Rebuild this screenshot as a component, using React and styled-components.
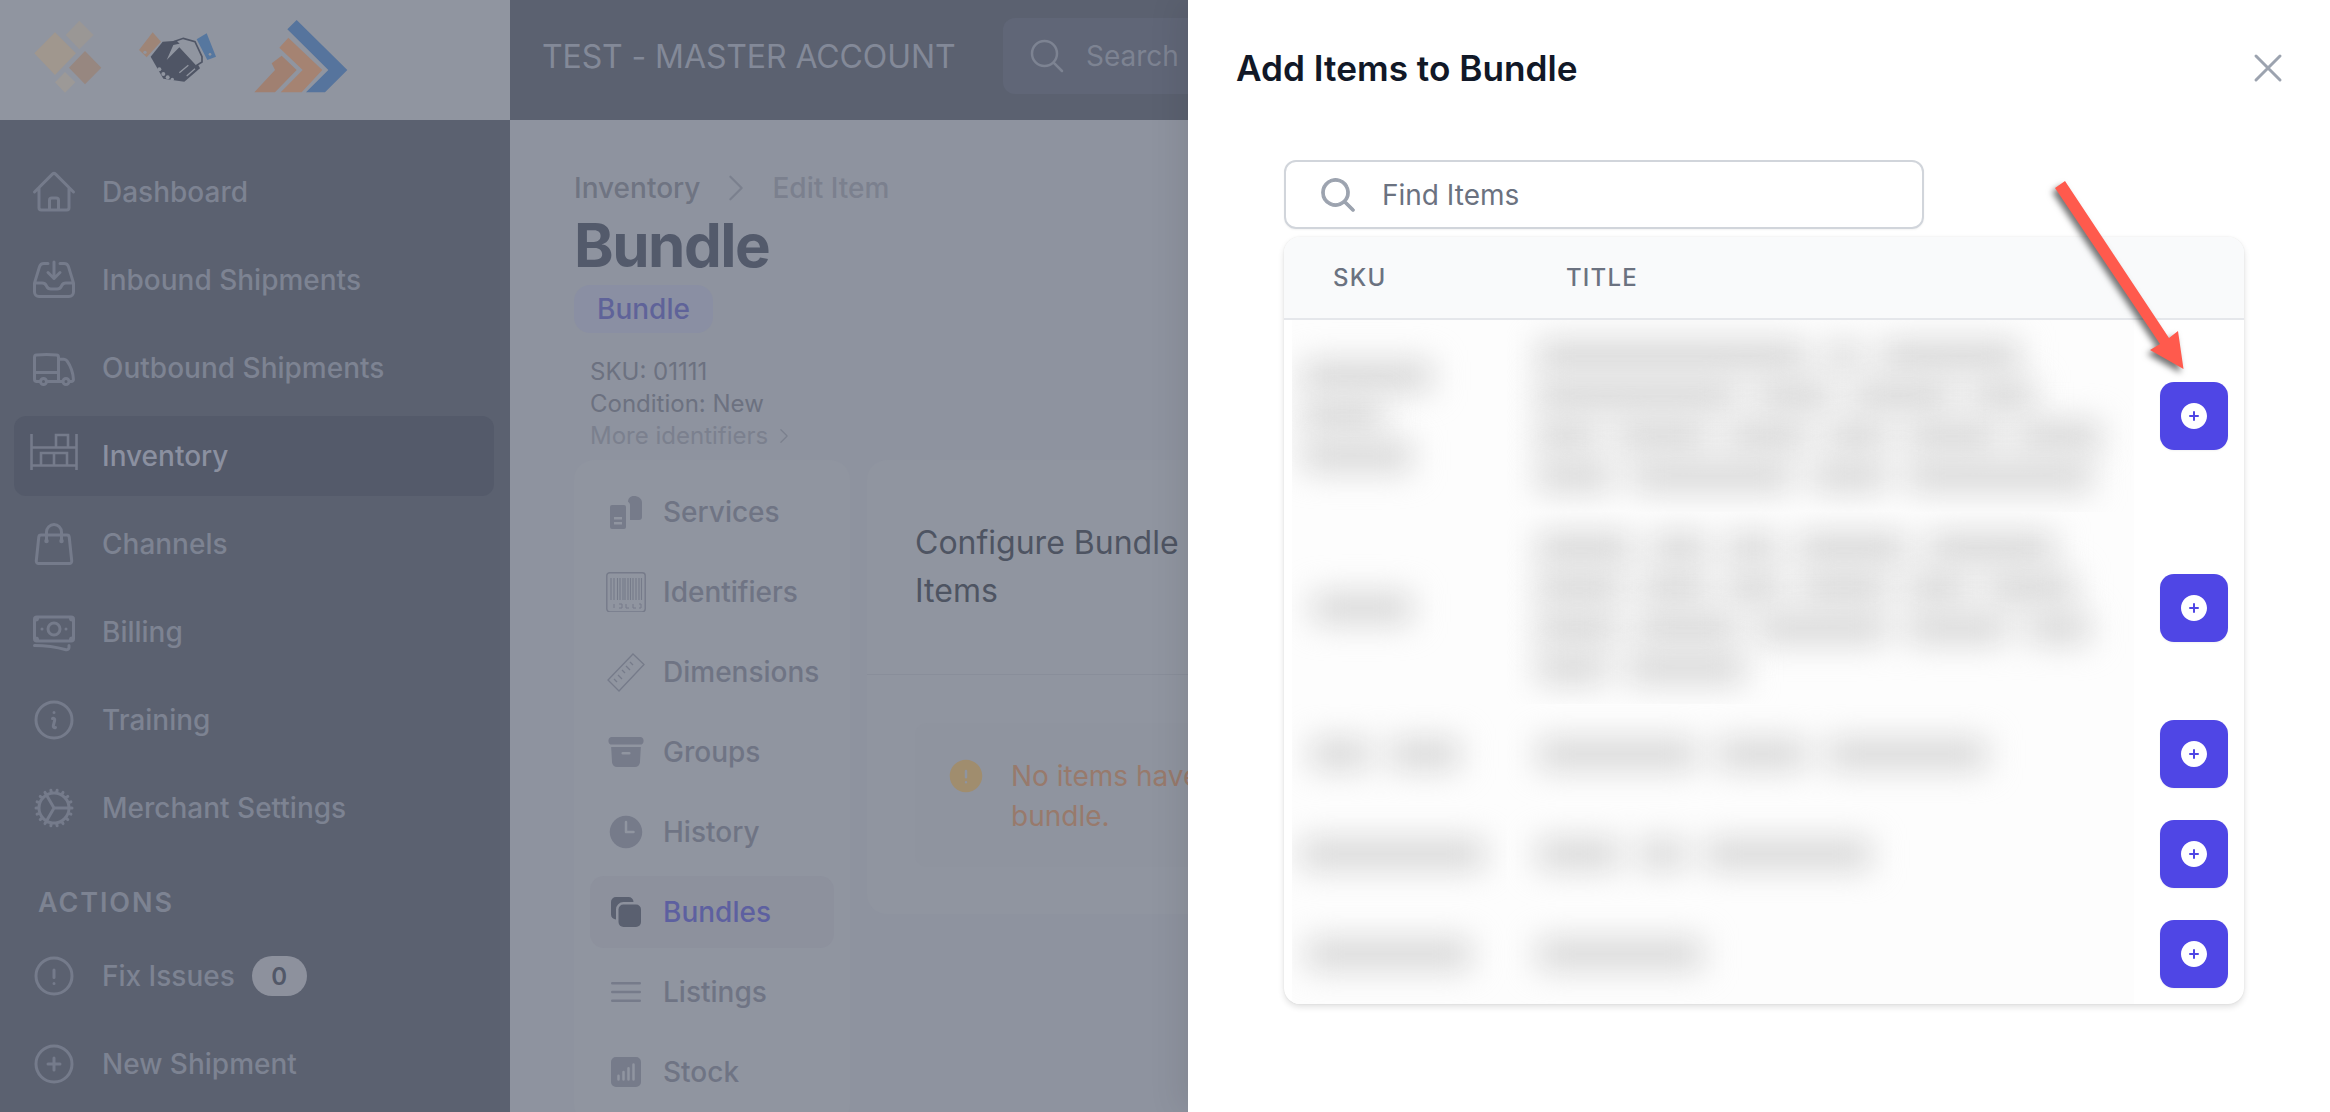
import React from 'react';
import styled, { createGlobalStyle } from 'styled-components';
import {
  HiOutlineHome, HiOutlineInboxArrowDown, HiOutlineTruck, HiOutlineShoppingBag, HiOutlineBanknotes,
  HiOutlineInformationCircle, HiOutlineCog, HiOutlineExclamationCircle, HiOutlinePlusCircle,
  HiOutlineMagnifyingGlass, HiOutlineChevronRight, HiOutlineXMark, HiOutlineBars3,
  HiArchiveBox, HiClock, HiSquare2Stack, HiChartBarSquare, HiExclamationCircle,
  HiMagnifyingGlass, HiPlusCircle,
} from 'react-icons/hi2';

const Global = createGlobalStyle`
  html, body { margin: 0; padding: 0; height: 1112px; overflow: hidden; background: #fff; }
  body { font-family: Inter, "Liberation Sans", sans-serif; }
  * { box-sizing: border-box; }
`;

const Page = styled.div`
  position: relative;
  width: 2330px;
  height: 1112px;
  display: flex;
  overflow: hidden;
`;

const Sidebar = styled.aside`
  width: 510px;
  flex: none;
  background: #5b6170;
  display: flex;
  flex-direction: column;
`;
const LogoBar = styled.div`
  height: 120px;
  background: #9095a0;
  flex: none;
`;
const Nav = styled.nav`
  padding: 32px 16px 0 14px;
  display: flex;
  flex-direction: column;
  gap: 8px;
`;
const NavItem = styled.div`
  height: 80px;
  display: flex;
  align-items: center;
  padding-left: 16px;
  gap: 24px;
  border-radius: 12px;
  font-size: 28px;
  font-weight: 500;
  color: ${p => (p.$active ? '#8b90a0' : '#7d8392')};
  background: ${p => (p.$active ? '#545a6a' : 'transparent')};
  svg { width: 48px; height: 48px; flex: none; color: #757b8b; }
`;
const SectionLabel = styled.div`
  margin: 27px 0 5px 24px;
  line-height: 40px;
  font-size: 27px;
  font-weight: 600;
  letter-spacing: 1.9px;
  color: #7d8392;
`;
const Count = styled.span`
  margin-left: -7px;
  width: 55px;
  height: 40px;
  border-radius: 20px;
  background: #8d919d;
  color: #525868;
  font-size: 24px;
  font-weight: 600;
  display: flex;
  align-items: center;
  justify-content: center;
`;

const Main = styled.main`
  flex: 1;
  min-width: 0;
  background: #8e939f;
  display: flex;
  flex-direction: column;
`;
const TopBar = styled.header`
  height: 120px;
  flex: none;
  background: #5b6170;
  display: flex;
  align-items: center;
  padding: 0 0 8px 32px;
  gap: 49px;
`;
const Account = styled.div`
  font-size: 32px;
  letter-spacing: -0.1px;
  color: #838998;
  white-space: nowrap;
  width: 412px;
`;
const TopSearch = styled.div`
  width: 500px;
  height: 76px;
  border-radius: 12px;
  background: #606677;
  display: flex;
  align-items: center;
  padding-left: 24px;
  gap: 19px;
  font-size: 28px;
  color: #7d8392;
  svg { width: 40px; height: 40px; color: #7d8392; }
`;
const Content = styled.div`
  padding: 48px 0 0 64px;
`;
const Crumbs = styled.div`
  display: flex;
  align-items: center;
  height: 40px;
  gap: 18px;
  font-size: 28px;
  font-weight: 500;
  color: #6f7482;
  svg { width: 36px; height: 36px; color: #7b808e; }
`;
const CrumbLast = styled.span`
  color: #7b808e;
`;
const PageTitle = styled.h1`
  margin: 1px 0 0;
  font-size: 60px;
  letter-spacing: -1.5px;
  line-height: 72px;
  font-weight: 700;
  color: #535a6b;
`;
const TypeBadge = styled.div`
  margin-top: 4px;
  width: 139px;
  height: 48px;
  border-radius: 16px;
  background: #8a8fa3;
  color: #5f6399;
  font-size: 28px;
  font-weight: 500;
  display: flex;
  align-items: center;
  justify-content: center;
`;
const Meta = styled.div`
  margin: 23px 0 8px 16px;
  font-size: 24px;
  line-height: 32px;
  color: #6c7180;
`;
const MoreLink = styled.div`
  display: flex;
  align-items: center;
  gap: 6px;
  color: #7b808e;
  svg { width: 20px; height: 20px; }
`;
const Columns = styled.div`
  display: flex;
  gap: 17px;
  align-items: flex-start;
`;
const SideCard = styled.div`
  width: 276px;
  flex: none;
  background: #9095a0;
  border-radius: 20px;
  padding: 16px;
  display: flex;
  flex-direction: column;
  gap: 8px;
`;
const SideItem = styled.div`
  height: 72px;
  display: flex;
  align-items: center;
  gap: 17px;
  padding-left: 16px;
  border-radius: 14px;
  font-size: 28px;
  font-weight: 500;
  color: ${p => (p.$active ? '#5d60a0' : '#6f7484')};
  background: ${p => (p.$active ? '#8d919d' : 'transparent')};
  svg { width: 40px; height: 40px; flex: none; color: ${p => (p.$active ? '#5a6070' : '#767b8a')}; }
`;
const MainCard = styled.section`
  width: 760px;
  flex: none;
  background: #9095a0;
  border-radius: 20px;
  height: 454px;
`;
const CardHead = styled.div`
  padding: 59px 48px 59px;
  border-bottom: 1px solid #898e9a;
  font-size: 32px;
  line-height: 48px;
  color: #4e5462;
  height: 215px;
`;
const CardTitle = styled.div`
  width: 300px;
`;
const Alert = styled.div`
  margin: 48px 0 0 48px;
  width: 660px;
  height: 144px;
  border-radius: 12px;
  background: #8f949f;
  display: flex;
  gap: 25px;
  padding: 33px 31px;
  font-size: 28px;
  line-height: 40px;
  color: #987a6c;
  svg { width: 40px; height: 40px; flex: none; color: #a08d6e; }
`;
const AlertText = styled.div`
  width: 490px;
`;

const Drawer = styled.div`
  position: absolute;
  top: 0;
  right: 0;
  bottom: 0;
  width: 1142px;
  background: #fff;
  box-shadow: -10px 0 30px rgba(0, 0, 0, 0.08);
`;
const DrawerHead = styled.div`
  display: flex;
  align-items: center;
  justify-content: space-between;
  padding: 44px 38px 0 48px;
  height: 92px;
  color: #111827;
  font-size: 35.2px;
  font-weight: 600;
  svg { width: 48px; height: 48px; color: #9ca3af; }
`;
const DrawerBody = styled.div`
  padding: 68px 0 0 96px;
`;
const FindBox = styled.div`
  width: 640px;
  height: 69px;
  border: 2px solid #d1d5db;
  border-radius: 12px;
  box-shadow: 0 1px 2px rgba(0, 0, 0, 0.05);
  display: flex;
  align-items: center;
  padding-left: 32px;
  gap: 24px;
  font-size: 28px;
  color: #6b7280;
  svg { width: 40px; height: 40px; color: #9ca3af; stroke: currentColor; stroke-width: 0.7; }
`;
const Table = styled.div`
  margin-top: 8px;
  width: 960px;
  height: 767px;
  border-radius: 16px;
  background: #fff;
  box-shadow: 0 3px 6px rgba(0, 0, 0, 0.12), 0 0 2px rgba(0, 0, 0, 0.08);
  overflow: hidden;
`;
const TableHead = styled.div`
  height: 83px;
  background: #f9fafb;
  border-bottom: 2px solid #e5e7eb;
  display: grid;
  grid-template-columns: 282px 1fr;
  align-items: center;
  padding-left: 49px;
  font-size: 24px;
  font-weight: 500;
  letter-spacing: 1.2px;
  color: #6b7280;
`;
const HeadTitle = styled.span`
  margin-left: -49px;
`;
const Row = styled.div`
  height: ${p => p.$h}px;
  display: grid;
  grid-template-columns: 215px 627px 94px;
  padding-left: 8px;
  align-items: stretch;
`;
const BlurCell = styled.div`
  background: #fdfdfd;
  overflow: hidden;
  display: flex;
  flex-direction: column;
  justify-content: center;
  padding-left: ${p => p.$pad}px;
`;
const BlurLine = styled.div`
  height: 40px;
  display: flex;
  align-items: center;
  gap: 20px;
  filter: blur(16px);
`;
const Smudge = styled.span`
  display: block;
  width: ${p => p.$w}px;
  height: 30px;
  background: #d6d6d6;
`;
const ActionCell = styled.div`
  display: flex;
  align-items: center;
  justify-content: flex-end;
`;
const AddButton = styled.button`
  width: 68px;
  height: 68px;
  border: 0;
  padding: 0;
  border-radius: 14px;
  background: #4f46e5;
  box-shadow: 0 1px 2px rgba(0, 0, 0, 0.05);
  display: flex;
  align-items: center;
  justify-content: center;
  svg { width: 32px; height: 32px; color: #fff; }
`;
const Arrow = styled.svg`
  position: absolute;
  left: 852px;
  top: 170px;
  width: 160px;
  height: 210px;
  overflow: visible;
  filter: drop-shadow(-3px 4px 3px rgba(0, 0, 0, 0.55));
`;

const InventoryIcon = () => (
  <svg viewBox="0 0 48 48" fill="none" stroke="currentColor" strokeWidth="2.6">
    <path d="M1.5 2v36M46.5 2v36M1.5 15.5h45M1.5 33.5h45" />
    <path d="M26 15V3h12v12M11 33V21h26v12M24 21v12" />
  </svg>
);
const ServicesIcon = () => (
  <svg viewBox="0 0 40 40" fill="currentColor">
    <path fillRule="evenodd" d="M6 13h12a2 2 0 012 2v20a2 2 0 01-2 2H6a2 2 0 01-2-2V15a2 2 0 012-2zm2 12v2.5h8V25zm0 5v2.5h8V30z" />
    <path d="M22 10c0-3.500 2-6 6-6s8 2.500 8 6.500V25c0 2-1 3-3 3h-9V13c0-1.500-1-3-2-3z" />
  </svg>
);
const BarcodeIcon = () => (
  <svg viewBox="0 0 40 40" fill="none" stroke="currentColor">
    <rect x="0.8" y="0.8" width="38.4" height="42" rx="3" strokeWidth="1.4" transform="scale(1 0.93)" />
    <path strokeWidth="1.1" d="M5 6v22M8 6v22M11.500 6v22M14 6v22M17 6v22M19 6v22M22 6v22M24.500 6v22M27 6v22M30 6v22M33 6v22M35.500 6v22" />
    <path strokeWidth="1" d="M8 32v4M13 32h3v4h-3M20 32v4h3M27 32v4h3M33 32h2v4h-2" />
  </svg>
);
const RulerIcon = () => (
  <svg viewBox="0 0 40 40" fill="none" stroke="currentColor" strokeWidth="1.3">
    <path d="M27 2l11 10.500L13 39 2 28z" />
    <path d="M24 10l3 3M20 14l4 4M16 18l3 3M12 23l4 4M8 27l3 3" />
  </svg>
);

const Logos = () => (
  <svg width="400" height="120" viewBox="0 0 1200 360">
    <g>
      <polygon points="165,97 228,160 165,225 103,160" fill="#a0978e" />
      <polygon points="238,62 281,105 238,148 197,105" fill="#9a9795" />
      <polygon points="255,153 304,203 255,253 207,203" fill="#978780" />
      <polygon points="195,216 226,247 195,278 165,247" fill="#9c9997" />
    </g>
    <g>
      <polygon points="417,150 458,97 483,125 440,172" fill="#9e8577" />
      <circle cx="435" cy="157" r="5" fill="#9095a0" />
      <polygon points="590,118 620,100 648,170 622,180" fill="#56779f" />
      <circle cx="630" cy="163" r="4" fill="#9095a0" />
      <path d="M452 170 L488 125 L530 122 L585 178 L600 205 L553 245 L490 236 Z" fill="#4f5565" />
      <path d="M500 180 L520 135 L552 128 L598 188 L588 196 L538 142 Z" fill="#9095a0" />
      <path d="M520 125 L550 115 L585 125 L606 170 L606 186 L590 196" fill="none" stroke="#4f5565" strokeWidth="5" />
      <g fill="#9095a0">
        <circle cx="478" cy="208" r="6" /><circle cx="490" cy="222" r="6" />
        <circle cx="503" cy="232" r="6" /><circle cx="517" cy="238" r="5" />
      </g>
      <path d="M538 218 L565 196 M560 228 L585 206" stroke="#9095a0" strokeWidth="4" />
    </g>
    <g>
      <polygon points="862,88 890,60 1042,210 975,277 918,277 985,210" fill="#56749d" />
      <polygon points="838,143 865,113 967,210 905,277 842,277 908,210" fill="#a58372" />
      <polygon points="815,190 845,167 890,210 825,277 763,277 825,210" fill="#a08071" />
    </g>
  </svg>
);

const navTop = [
  [HiOutlineHome, 'Dashboard'],
  [HiOutlineInboxArrowDown, 'Inbound Shipments'],
  [HiOutlineTruck, 'Outbound Shipments'],
  [InventoryIcon, 'Inventory', true],
  [HiOutlineShoppingBag, 'Channels'],
  [HiOutlineBanknotes, 'Billing'],
  [HiOutlineInformationCircle, 'Training'],
  [HiOutlineCog, 'Merchant Settings'],
];
const sideNav = [
  [ServicesIcon, 'Services'],
  [BarcodeIcon, 'Identifiers'],
  [RulerIcon, 'Dimensions'],
  [HiArchiveBox, 'Groups'],
  [HiClock, 'History'],
  [HiSquare2Stack, 'Bundles', true],
  [HiOutlineBars3, 'Listings'],
  [HiChartBarSquare, 'Stock'],
];
const rows = [
  { h: 192, skuPad: 10, sku: [[130], [80], [110]], title: [[271, 32, 140], [200, 75, 100, 63], [60, 90, 80, 60, 90, 84], [75, 160, 75, 185]] },
  { h: 192, skuPad: 20, sku: [[100]], title: [[95, 55, 50, 110, 128], [85, 65, 55, 85, 60, 88], [80, 100, 130, 100, 63], [70, 118]] },
  { h: 100, skuPad: 18, sku: [[60, 70]], title: [[160, 90, 160]] },
  { h: 100, skuPad: 8, sku: [[185]], title: [[83, 45, 166]] },
  { h: 100, skuPad: 14, sku: [[165]], title: [[166]] },
];

const Blurred = ({ lines, pad }) => (
  <BlurCell $pad={pad}>
    {lines.map((words, i) => (
      <BlurLine key={i}>
        {words.map((w, j) => <Smudge key={j} $w={w} />)}
      </BlurLine>
    ))}
  </BlurCell>
);

export default function App() {
  return (
    <Page>
      <Global />
      <Sidebar>
        <LogoBar><Logos /></LogoBar>
        <Nav>
          {navTop.map(([Icon, label, active]) => (
            <NavItem key={label} $active={active}><Icon />{label}</NavItem>
          ))}
          <SectionLabel>ACTIONS</SectionLabel>
          <NavItem><HiOutlineExclamationCircle />Fix Issues<Count>0</Count></NavItem>
          <NavItem><HiOutlinePlusCircle />New Shipment</NavItem>
        </Nav>
      </Sidebar>
      <Main>
        <TopBar>
          <Account>TEST - MASTER ACCOUNT</Account>
          <TopSearch><HiOutlineMagnifyingGlass />Search</TopSearch>
        </TopBar>
        <Content>
          <Crumbs>Inventory<HiOutlineChevronRight /><CrumbLast>Edit Item</CrumbLast></Crumbs>
          <PageTitle>Bundle</PageTitle>
          <TypeBadge>Bundle</TypeBadge>
          <Meta>
            <div>SKU: 01111</div>
            <div>Condition: New</div>
            <MoreLink>More identifiers<HiOutlineChevronRight /></MoreLink>
          </Meta>
          <Columns>
            <SideCard>
              {sideNav.map(([Icon, label, active]) => (
                <SideItem key={label} $active={active}><Icon />{label}</SideItem>
              ))}
            </SideCard>
            <MainCard>
              <CardHead><CardTitle>Configure Bundle Items</CardTitle></CardHead>
              <Alert>
                <HiExclamationCircle />
                <AlertText>No items have been added to this bundle.</AlertText>
              </Alert>
            </MainCard>
          </Columns>
        </Content>
      </Main>
      <Drawer>
        <DrawerHead>Add Items to Bundle<HiOutlineXMark /></DrawerHead>
        <DrawerBody>
          <FindBox><HiMagnifyingGlass />Find Items</FindBox>
          <Table>
            <TableHead><span>SKU</span><HeadTitle>TITLE</HeadTitle></TableHead>
            {rows.map((r, i) => (
              <Row key={i} $h={r.h}>
                <Blurred lines={r.sku} pad={r.skuPad} />
                <Blurred lines={r.title} pad={30} />
                <ActionCell><AddButton aria-label="Add"><HiPlusCircle /></AddButton></ActionCell>
              </Row>
            ))}
          </Table>
        </DrawerBody>
        <Arrow viewBox="0 0 160 210">
          <polygon points="25,11 129,168 138,161 143.5,199 110,180 120,174 15,18" fill="#ff5a4d" />
        </Arrow>
      </Drawer>
    </Page>
  );
}
